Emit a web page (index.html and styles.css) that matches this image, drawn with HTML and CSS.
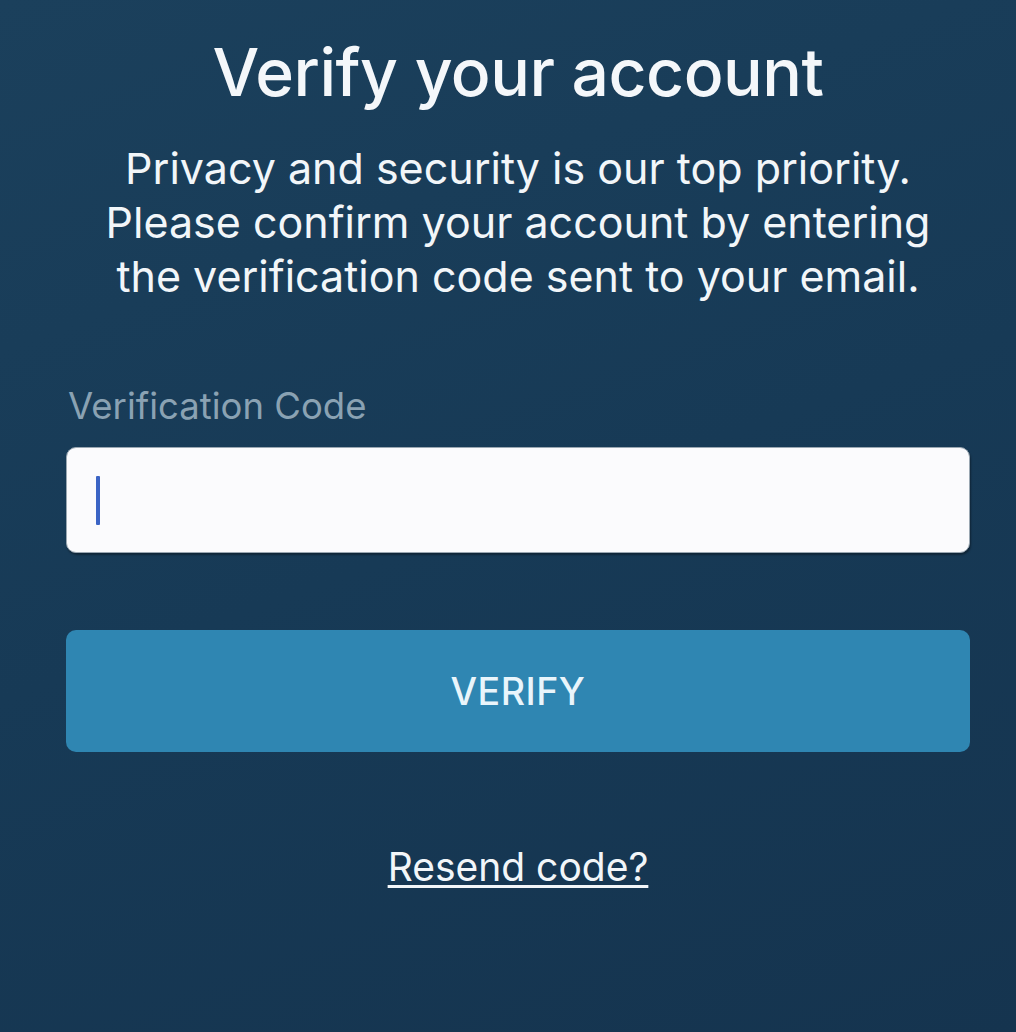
FILE: index.html
```html
<!DOCTYPE html>
<html lang="en">
<head>
  <meta charset="UTF-8">
  <title>Verify your account</title>
  <link rel="stylesheet" href="styles.css">
</head>
<body>
<div class="container">
  <h1>Verify your account</h1>
  <p class="intro">Privacy and security is our top priority.<br>Please confirm your account by entering<br>the verification code sent to your email.</p>
  <form class="verify-form">
    <label class="field-label" for="code">Verification Code</label>
    <div class="code-input">
      <span class="caret"></span>
      <input type="text" id="code" name="code">
    </div>
    <button type="submit" class="verify-btn">VERIFY</button>
  </form>
  <a href="#" class="resend">Resend code?</a>
</div>
</body>
</html>
```

FILE: styles.css
```css
html, body { margin: 0; padding: 0; height: 100%; }
body {
  background: linear-gradient(160deg, #1b405c 0%, #173a56 50%, #15344f 100%);
  font-family: 'Inter', 'Liberation Sans', sans-serif;
  color: #f4f7fa;
  overflow: hidden;
}
.container { width: 904px; margin-left: 66px; display: flex; flex-direction: column; align-items: stretch; }
h1 { margin: 32px 0 0 0; text-align: center; font-size: 66px; font-weight: 500; letter-spacing: -0.5px; line-height: 80px; white-space: nowrap; }
.intro { margin: 29px 0 0 0; text-align: center; font-size: 43px; line-height: 54px; font-weight: 400; color: #f2f6f9; white-space: nowrap; }
.verify-form { display: flex; flex-direction: column; margin-top: 81px; }
.field-label { font-size: 36.5px; color: #8aa2b3; line-height: 44px; padding-left: 2px; }
.code-input {
  margin-top: 19px; height: 106px; background: #fbfbfd; border: 1px solid #9aa7b2; border-radius: 10px;
  display: flex; align-items: center; padding-left: 29px; box-sizing: border-box;
  box-shadow: 1px 2px 2px rgba(0,0,0,0.35);
}
.caret { width: 4px; height: 49px; background: #3b64c5; border-radius: 1px; }
.code-input input { border: none; outline: none; background: transparent; flex: 1; font-size: 36px; font-family: inherit; }
.verify-btn {
  margin-top: 77px; height: 122px; border: none; border-radius: 10px; background: #2f86b2;
  color: #e9f5fb; font-family: inherit; font-size: 37.5px; font-weight: 500; letter-spacing: 0.5px; cursor: pointer;
}
.resend {
  align-self: center; margin-top: 91px; color: #f2f6f9; font-size: 39px; line-height: 47px; text-decoration: underline;
  text-underline-offset: 4px; text-decoration-thickness: 3px;
}
```
